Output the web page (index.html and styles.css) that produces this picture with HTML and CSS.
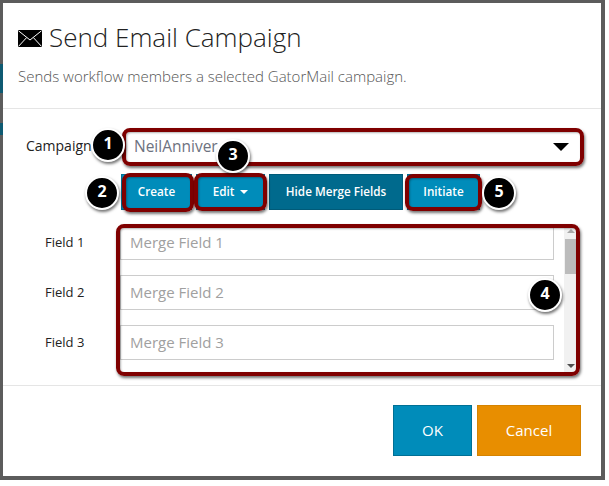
FILE: index.html
```html
<!DOCTYPE html>
<html lang="en">
<head>
<meta charset="utf-8">
<title>Send Email Campaign</title>
<link rel="stylesheet" href="styles.css">
</head>
<body>
<div class="frame">
  <div class="peek peek-a"></div>
  <div class="peek peek-b"></div>
  <div class="modal">
    <header class="modal-head">
      <h1 class="title">
        <svg class="mail" viewBox="0 0 24 17" width="24" height="17"><rect width="24" height="17" fill="#000"/><path d="M0.5 0.8 L12 10 L23.5 0.8 M0.5 16.4 L8.6 7.6 M23.5 16.4 L15.4 7.6" fill="none" stroke="#fff" stroke-width="1"/></svg>
        <span>Send Email Campaign</span>
      </h1>
      <p class="subtitle">Sends workflow members a selected GatorMail campaign.</p>
    </header>
    <section class="modal-body">
      <div class="campaign-row">
        <label class="campaign-label">Campaign</label>
        <div class="select">
          <span class="select-value">NeilAnniver</span>
          <span class="caret-big"></span>
        </div>
      </div>
      <div class="actions">
        <button class="btn">Create</button>
        <button class="btn btn-edit">Edit <span class="caret-small"></span></button>
        <button class="btn btn-dark">Hide Merge Fields</button>
        <button class="btn btn-init">Initiate</button>
      </div>
      <div class="fields">
        <div class="label-col">
          <div class="field-label">Field 1</div>
          <div class="field-label">Field 2</div>
          <div class="field-label">Field 3</div>
        </div>
        <div class="scroll-box">
          <div class="inputs">
            <div class="input">Merge Field 1</div>
            <div class="input">Merge Field 2</div>
            <div class="input">Merge Field 3</div>
          </div>
          <div class="scrollbar">
            <span class="arrow-up"></span>
            <span class="thumb"></span>
            <span class="arrow-down"></span>
          </div>
        </div>
      </div>
    </section>
    <footer class="modal-foot">
      <button class="foot-btn ok">OK</button>
      <button class="foot-btn cancel">Cancel</button>
    </footer>
  </div>

  <div class="hl hl-select"></div>
  <div class="hl hl-create"></div>
  <div class="hl hl-edit"></div>
  <div class="hl hl-init"></div>
  <div class="hl hl-fields"></div>
  <div class="badge b1">1</div>
  <div class="badge b2">2</div>
  <div class="badge b3">3</div>
  <div class="badge b4">4</div>
  <div class="badge b5">5</div>
</div>
</body>
</html>
```

FILE: styles.css
```css
* { box-sizing: border-box; }
html, body { margin: 0; padding: 0; background: #fff; }
body { font-family: "Open Sans", sans-serif; color: #222; }

.frame {
  position: relative;
  width: 605px;
  height: 480px;
  padding: 3px 4px 4px 3px;
  background: #5c5c5c;
}
.peek { position: absolute; left: 0; width: 3px; }
.peek-a { top: 64px; height: 29px; background: #0e5a72; }
.peek-b { top: 123px; height: 12px; background: #0e5a72; }

.modal {
  position: relative;
  display: flex;
  flex-direction: column;
  height: 100%;
  background: #fff;
}
.modal-head {
  height: 106px;
  padding: 16px 15px 0 15px;
  border-bottom: 1px solid #e5e5e5;
}
.title {
  display: flex;
  align-items: center;
  gap: 7px;
  margin: 0;
  height: 36px;
  font-size: 26px;
  font-weight: 300;
  color: #222;
  line-height: 36px;
}
.mail { flex: none; margin-top: 3px; }
.subtitle {
  margin: 11px 0 0;
  font-size: 15px;
  line-height: 20px;
  font-weight: 300;
  color: #555;
}

.modal-body { height: 276px; position: relative; }
.campaign-row {
  display: flex;
  align-items: center;
  margin-top: 21px;
  height: 34px;
  padding-left: 23px;
}
.campaign-label { width: 98px; margin-top: -4px; font-size: 14px; color: #222; }
.select {
  flex: none;
  display: flex;
  align-items: center;
  justify-content: space-between;
  width: 456px;
  height: 34px;
  padding: 0 11px 0 10px;
  overflow: hidden;
}
.select-value { font-size: 15.5px; margin-top: -3px; color: #6d7280; }
.caret-big {
  width: 0; height: 0;
  border-left: 8px solid transparent;
  border-right: 8px solid transparent;
  border-top: 8px solid #000;
}

.actions {
  display: flex;
  margin-top: 10px;
  padding-left: 118px;
}
.btn {
  height: 36px;
  width: 71px;
  padding: 0;
  margin-right: 4px;
  border: 1px solid #007095;
  background: #008cba;
  color: #fff;
  font: 600 11.7px/1 "Open Sans", sans-serif;
}
.btn-edit { width: 69px; }
.btn-dark { width: 134px; background: #006a8d; border-color: #005a78; }
.btn-init { width: 73px; margin-right: 0; }
.caret-small {
  display: inline-block;
  width: 0; height: 0;
  margin-left: 3px;
  vertical-align: 2px;
  border-left: 4px solid transparent;
  border-right: 4px solid transparent;
  border-top: 4px solid #fff;
}

.fields {
  display: flex;
  margin-top: 15px;
  height: 147px;
  padding-left: 42px;
}
.label-col { width: 75px; margin-top: 1px; overflow: hidden; }
.field-label { height: 50px; padding-top: 7px; font-size: 13px; line-height: 18px; color: #222; }
.scroll-box {
  flex: none;
  display: flex;
  width: 458px;
  height: 147px;
  overflow: hidden;
}
.inputs {
  flex: none;
  width: 434px;
  display: flex;
  flex-direction: column;
  gap: 15px;
}
.input {
  flex: none;
  height: 35px;
  padding-left: 9px;
  border: 1px solid #ccc;
  font-size: 15px;
  line-height: 33px;
  color: #a0a0a0;
}
.scrollbar {
  position: relative;
  flex: none;
  width: 14px;
  margin-left: 10px;
  background: #f1f1f1;
}
.thumb {
  position: absolute;
  left: 1px;
  top: 14px;
  width: 12px;
  height: 35px;
  background: #bcbcbc;
}
.arrow-up, .arrow-down {
  position: absolute;
  left: 3px;
  width: 0; height: 0;
  border-left: 4px solid transparent;
  border-right: 4px solid transparent;
}
.arrow-up { top: 4px; border-bottom: 4px solid #a8a8a8; }
.arrow-down { bottom: 4px; border-top: 4px solid #505050; }

.modal-foot {
  flex: 1;
  display: flex;
  justify-content: flex-end;
  gap: 5px;
  padding: 19px 20px 0 0;
  border-top: 1px solid #e5e5e5;
}
.foot-btn {
  height: 51px;
  padding: 0;
  color: #fff;
  font: 400 15px/1 "Open Sans", sans-serif;
}
.ok { width: 79px; background: #008cba; border: 1px solid #007095; }
.cancel { width: 104px; background: #e88e00; border: 1px solid #d58300; }

.hl {
  position: absolute;
  border: 4px solid #7f0000;
  border-radius: 8px;
  box-shadow: 1px 2px 3px rgba(0,0,0,.55), inset 1px 1px 2px rgba(0,0,0,.3);
}
.hl-select { left: 122px; top: 128px; width: 462px; height: 38px; }
.hl-create { left: 122px; top: 173px; width: 72px; height: 39px; }
.hl-edit { left: 194px; top: 173px; width: 73px; height: 38px; }
.hl-init { left: 405px; top: 174px; width: 77px; height: 37px; }
.hl-fields { left: 116px; top: 224px; width: 464px; height: 152px; }

.badge {
  position: absolute;
  width: 34px;
  height: 34px;
  border-radius: 50%;
  background: #000;
  border: 2px solid #fff;
  box-shadow: 1px 2px 3px rgba(0,0,0,.55);
  color: #fff;
  font-size: 16px;
  font-weight: 700;
  line-height: 27px;
  text-align: center;
}
.b1 { left: 91px; top: 128px; }
.b2 { left: 85px; top: 176px; }
.b3 { left: 216px; top: 139px; }
.b4 { left: 528px; top: 278px; }
.b5 { left: 482px; top: 176px; }
```
